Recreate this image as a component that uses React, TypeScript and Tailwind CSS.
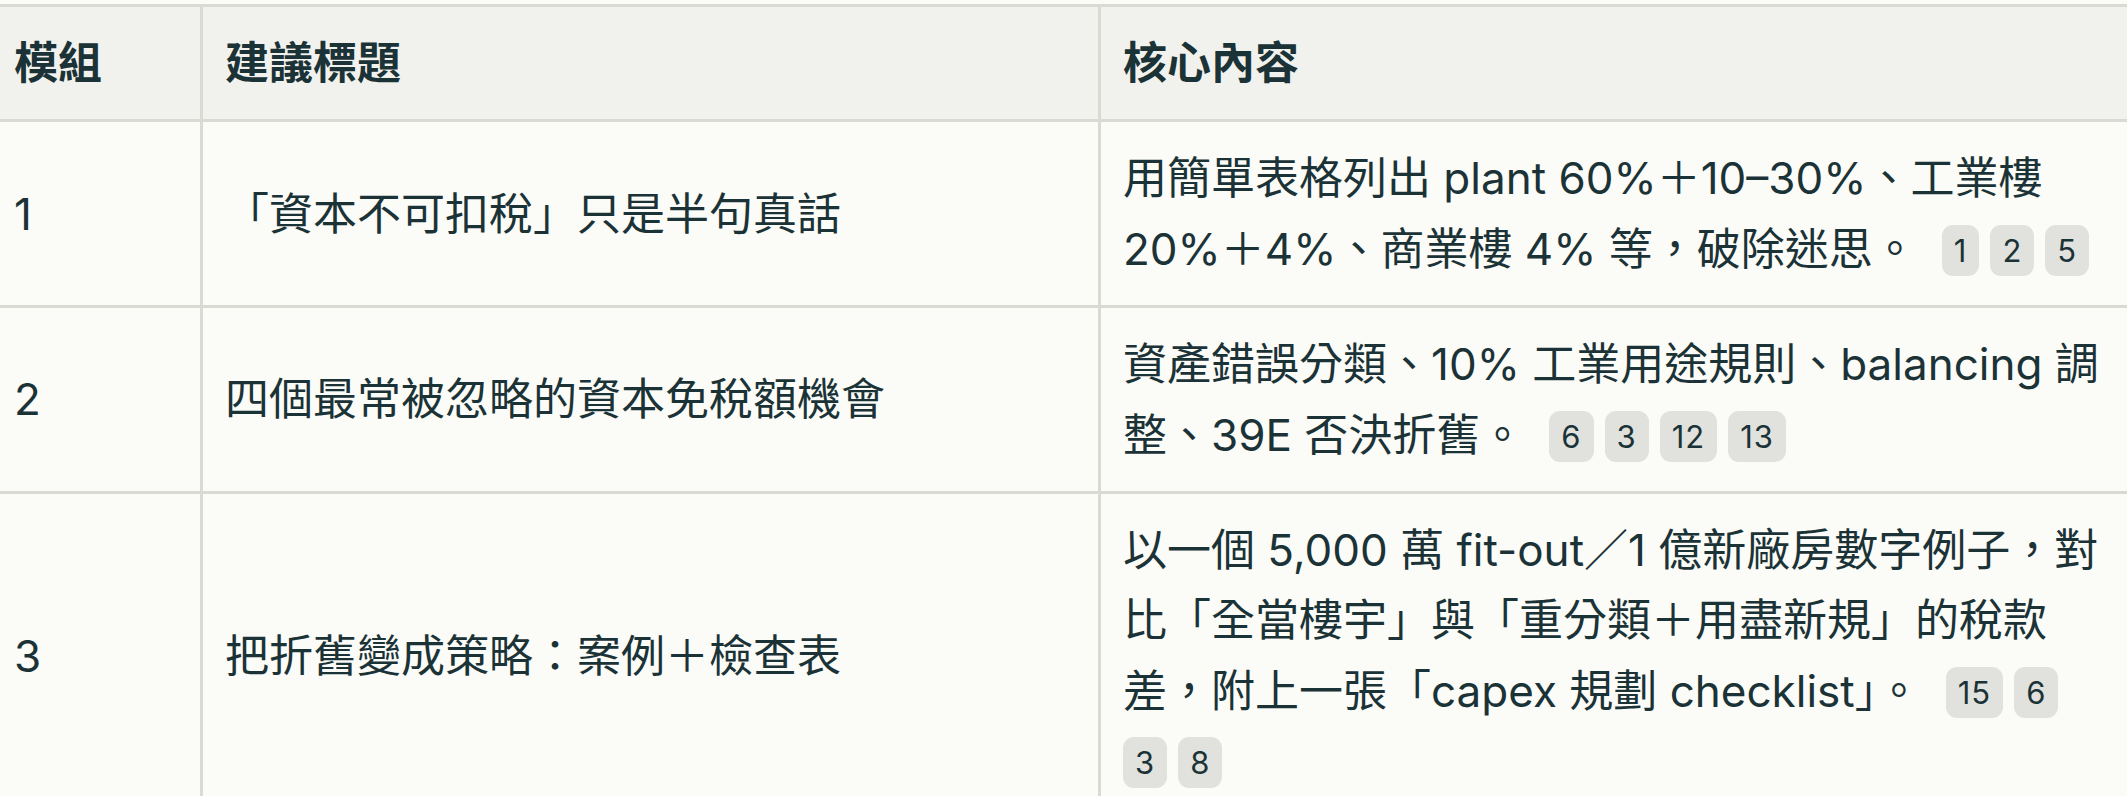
import React from "react";

type Line = { text: string; refs?: string[]; lead?: boolean };

type Row = { id: string; title: string; lines: Line[] };

const rows: Row[] = [
  {
    id: "1",
    title: "「資本不可扣稅」只是半句真話",
    lines: [
      { text: "用簡單表格列出 plant 60%＋10–30%、工業樓" },
      { text: "20%＋4%、商業樓 4% 等，破除迷思。", refs: ["1", "2", "5"], lead: true },
    ],
  },
  {
    id: "2",
    title: "四個最常被忽略的資本免稅額機會",
    lines: [
      { text: "資產錯誤分類、10% 工業用途規則、balancing 調" },
      { text: "整、39E 否決折舊。", refs: ["6", "3", "12", "13"], lead: true },
    ],
  },
  {
    id: "3",
    title: "把折舊變成策略：案例＋檢查表",
    lines: [
      { text: "以一個 5,000 萬 fit-out／1 億新廠房數字例子，對" },
      { text: "比「全當樓宇」與「重分類＋用盡新規」的稅款" },
      { text: "差，附上一張「capex 規劃 checklist」。", refs: ["15", "6"], lead: true },
      { text: "", refs: ["3", "8"] },
    ],
  },
];

// 引用編號小方塊
const Badge = ({ n, ml }: { n: string; ml: string }) => (
  <span
    className={`${ml} inline-flex h-[51px] items-center rounded-[11px] bg-[#e1e2dd] px-[12px] align-[3px] text-[31px] leading-none tracking-[1px]`}
  >
    {n}
  </span>
);

export default function App() {
  return (
    <div className="min-h-screen w-full overflow-hidden bg-[#fbfcf8] pt-[4px] font-['Inter','Noto_Sans_CJK_TC',sans-serif] text-[44px] leading-[1.6] text-[#1b3337]">
      <div className="grid w-[2137px] grid-cols-[203px_898px_1036px] border-t-[3px] border-[#d9dad3]">
        {/* 表頭 */}
        <div className="border-r-[3px] border-b-[3px] border-[#d9dad3] bg-[#f1f2ed] py-[21px] pl-[14px] pr-[22px] font-bold">
          模組
        </div>
        <div className="border-r-[3px] border-b-[3px] border-[#d9dad3] bg-[#f1f2ed] px-[22px] py-[21px] font-bold">
          建議標題
        </div>
        <div className="border-b-[3px] border-[#d9dad3] bg-[#f1f2ed] px-[22px] py-[21px] font-bold">
          核心內容
        </div>

        {rows.map((row) => (
          <React.Fragment key={row.id}>
            <div className="flex items-center border-r-[3px] border-b-[3px] border-[#d9dad3] py-[21px] pl-[14px] pr-[22px]">
              {row.id}
            </div>
            <div className="flex items-center border-r-[3px] border-b-[3px] border-[#d9dad3] px-[22px] py-[21px]">
              {row.title}
            </div>
            <div className="border-b-[3px] border-[#d9dad3] px-[22px] py-[21px]">
              {row.lines.map((line, i) => (
                <div key={i} className="whitespace-nowrap">
                  {line.text}
                  {line.refs?.map((r, j) => (
                    <Badge
                      key={j}
                      n={r}
                      ml={j === 0 ? (line.lead ? "ml-[25px]" : "ml-0") : "ml-[11px]"}
                    />
                  ))}
                </div>
              ))}
            </div>
          </React.Fragment>
        ))}
      </div>
    </div>
  );
}
